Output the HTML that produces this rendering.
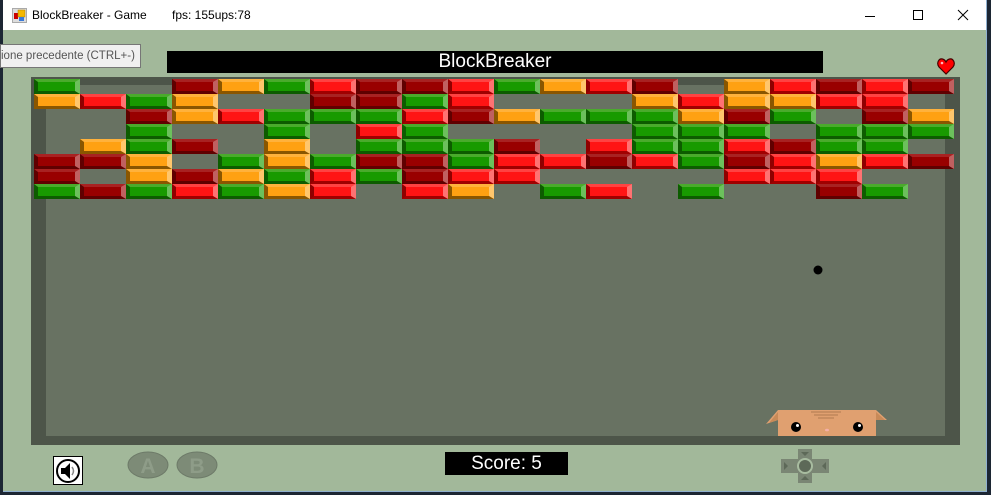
<!DOCTYPE html>
<html><head><meta charset="utf-8"><style>
*{margin:0;padding:0;box-sizing:border-box}
body{width:991px;height:495px;overflow:hidden;background:#1c2633;position:relative;font-family:"Liberation Sans",sans-serif}
#win{position:absolute;left:3px;top:0;width:984px;height:492px;background:#a2b89a;border-right:1px solid #8fb0d0;border-bottom:1px solid #8fb0d0}
#tb{position:absolute;left:0;top:0;width:983px;height:30px;background:#fff}
.t{position:absolute;font-size:12px;color:#000;top:8px}
#outer{position:absolute;left:28px;top:77px;width:929px;height:368px;background:#4d5549}
#inner{position:absolute;left:15px;top:8px;width:899px;height:351px;background:#687262}
#bricks{position:absolute;left:34px;top:79px}
.r{height:15px;display:flex}
.r i{display:block;width:46px;height:15px;border-style:solid;border-width:3px 5px 3px 4px}
.e{visibility:hidden}
.G{background:#189a00;border-color:#4aab2c #6cc05c #0d5c00 #0d5c00}
.O{background:#ffa112;border-color:#ffb23c #ffc66c #8a5600 #8a5600}
.R{background:#ff1414;border-color:#ff4242 #ff7272 #a00000 #900000}
.D{background:#990000;border-color:#a82222 #c06060 #600000 #600000}
</style></head><body>
<div id="win">
<div id="tb">
<svg style="position:absolute;left:9px;top:8px" width="15" height="15"><rect x="0.5" y="0.5" width="14" height="14" fill="#ddd" stroke="#aaa"/><rect x="2" y="5" width="4" height="6" fill="#c00"/><rect x="6" y="2" width="7" height="7" fill="#f5b800" stroke="#b08000" stroke-width=".5"/><rect x="7" y="9" width="5" height="4" fill="#3a7ad8"/></svg>
<div class="t" style="left:29px">BlockBreaker - Game</div>
<div class="t" style="left:169px">fps: 155ups:78</div>
<svg style="position:absolute;left:860px;top:8px" width="120" height="16" fill="none" stroke="#000" stroke-width="1"><line x1="2" y1="8.5" x2="12" y2="8.5"/><rect x="50.5" y="2.5" width="9" height="9"/><path d="M95 2 L105 12 M105 2 L95 12"/></svg>
</div>
<div style="position:absolute;left:-3px;top:44px;width:141px;height:24px;background:#f0f0f0;border:1px solid #767676;font-size:11.5px;color:#555;padding:5px 0 0 0;white-space:nowrap;overflow:hidden">ione precedente (CTRL+-)</div>
<div style="position:absolute;left:164px;top:51px;width:656px;height:22px;background:#000;color:#fff;font-size:19px;text-align:center;line-height:22px">BlockBreaker</div>
<svg style="position:absolute;left:934px;top:58px" width="18" height="17"><path d="M9 16 L2 9 C-1 5 2 0 5.5 1 C7.5 1.5 8.5 3 9 4 C9.5 3 10.5 1.5 12.5 1 C16 0 19 5 16 9 Z" fill="#f00" stroke="#400" stroke-width="1.2"/><circle cx="5" cy="5" r="1.3" fill="#fbb"/></svg>
<div id="outer"><div id="inner"></div></div>
<svg style="position:absolute;left:810px;top:265px" width="11" height="11"><circle cx="5" cy="5" r="4.5" fill="#000"/></svg>
<svg style="position:absolute;left:763px;top:408px" width="122" height="28"><path d="M12 2 L110 2 L121 12 L110 12 L110 28 L12 28 L12 12 L0 16 Z" fill="#e0a070"/><path d="M12 12 L3 15 L12 4 Z M110 12 L119 12 L110 4Z" fill="#c88a58"/><path d="M45 4 H75 M48 7 H72 M52 10 H68" stroke="#b07a50" stroke-width="1"/><circle cx="30" cy="19" r="5" fill="#000"/><circle cx="31.5" cy="17.5" r="1.5" fill="#fff"/><circle cx="92" cy="19" r="5" fill="#000"/><circle cx="93.5" cy="17.5" r="1.5" fill="#fff"/><ellipse cx="61" cy="22" rx="2" ry="1.3" fill="#f4b0a8"/></svg>
<div style="position:absolute;left:50px;top:456px;width:30px;height:29px;background:#fff;border:1px solid #000"></div>
<svg style="position:absolute;left:52px;top:458px" width="26" height="26"><circle cx="13" cy="13" r="11" fill="#fff" stroke="#000" stroke-width="2"/><path d="M6 10 H10 L15 5 V21 L10 16 H6 Z" fill="#000"/><path d="M17 9 Q20 13 17 17" stroke="#888" fill="none" stroke-width="1.5"/></svg>
<svg style="position:absolute;left:124px;top:451px" width="100" height="30"><ellipse cx="21" cy="14" rx="20" ry="13" fill="#7d8b77" stroke="#6d7a68"/><ellipse cx="70" cy="14" rx="20" ry="13" fill="#7d8b77" stroke="#6d7a68"/><text x="21" y="22" font-size="21" font-weight="bold" text-anchor="middle" fill="#8e9c88" font-family="Liberation Sans">A</text><text x="70" y="22" font-size="21" font-weight="bold" text-anchor="middle" fill="#8e9c88" font-family="Liberation Sans">B</text></svg>
<div style="position:absolute;left:442px;top:452px;width:123px;height:23px;background:#000;color:#fff;font-size:19px;text-align:center;line-height:23px">Score: 5</div>
<svg style="position:absolute;left:778px;top:448px" width="50" height="36"><path d="M17 1 H31 V11 H48 V25 H31 V35 H17 V25 H0 V11 H17 Z" fill="#7a8674"/><circle cx="24" cy="18" r="7" fill="#5d6958" stroke="#a8bca0" stroke-width="2"/><path d="M20 4 H28 L24 8Z M20 32 H28 L24 28Z M3 14 V22 L7 18Z M45 14 V22 L41 18Z" fill="#5d6958"/></svg>
</div>
<div id="bricks">
<div class="r"><i class="G"></i><i class="e"></i><i class="e"></i><i class="D"></i><i class="O"></i><i class="G"></i><i class="R"></i><i class="D"></i><i class="D"></i><i class="R"></i><i class="G"></i><i class="O"></i><i class="R"></i><i class="D"></i><i class="e"></i><i class="O"></i><i class="R"></i><i class="D"></i><i class="R"></i><i class="D"></i></div>
<div class="r"><i class="O"></i><i class="R"></i><i class="G"></i><i class="O"></i><i class="e"></i><i class="e"></i><i class="D"></i><i class="D"></i><i class="G"></i><i class="R"></i><i class="e"></i><i class="e"></i><i class="e"></i><i class="O"></i><i class="R"></i><i class="O"></i><i class="O"></i><i class="R"></i><i class="R"></i><i class="e"></i></div>
<div class="r"><i class="e"></i><i class="e"></i><i class="D"></i><i class="O"></i><i class="R"></i><i class="G"></i><i class="G"></i><i class="G"></i><i class="R"></i><i class="D"></i><i class="O"></i><i class="G"></i><i class="G"></i><i class="G"></i><i class="O"></i><i class="D"></i><i class="G"></i><i class="e"></i><i class="D"></i><i class="O"></i></div>
<div class="r"><i class="e"></i><i class="e"></i><i class="G"></i><i class="e"></i><i class="e"></i><i class="G"></i><i class="e"></i><i class="R"></i><i class="G"></i><i class="e"></i><i class="e"></i><i class="e"></i><i class="e"></i><i class="G"></i><i class="G"></i><i class="G"></i><i class="e"></i><i class="G"></i><i class="G"></i><i class="G"></i></div>
<div class="r"><i class="e"></i><i class="O"></i><i class="G"></i><i class="D"></i><i class="e"></i><i class="O"></i><i class="e"></i><i class="G"></i><i class="G"></i><i class="G"></i><i class="D"></i><i class="e"></i><i class="R"></i><i class="G"></i><i class="G"></i><i class="R"></i><i class="D"></i><i class="G"></i><i class="G"></i><i class="e"></i></div>
<div class="r"><i class="D"></i><i class="D"></i><i class="O"></i><i class="e"></i><i class="G"></i><i class="O"></i><i class="G"></i><i class="D"></i><i class="D"></i><i class="G"></i><i class="R"></i><i class="R"></i><i class="D"></i><i class="R"></i><i class="G"></i><i class="D"></i><i class="R"></i><i class="O"></i><i class="R"></i><i class="D"></i></div>
<div class="r"><i class="D"></i><i class="e"></i><i class="O"></i><i class="D"></i><i class="O"></i><i class="G"></i><i class="R"></i><i class="G"></i><i class="D"></i><i class="R"></i><i class="R"></i><i class="e"></i><i class="e"></i><i class="e"></i><i class="e"></i><i class="R"></i><i class="R"></i><i class="R"></i><i class="e"></i><i class="e"></i></div>
<div class="r"><i class="G"></i><i class="D"></i><i class="G"></i><i class="R"></i><i class="G"></i><i class="O"></i><i class="R"></i><i class="e"></i><i class="R"></i><i class="O"></i><i class="e"></i><i class="G"></i><i class="R"></i><i class="e"></i><i class="G"></i><i class="e"></i><i class="e"></i><i class="D"></i><i class="G"></i><i class="e"></i></div>
</div>
</body></html>
